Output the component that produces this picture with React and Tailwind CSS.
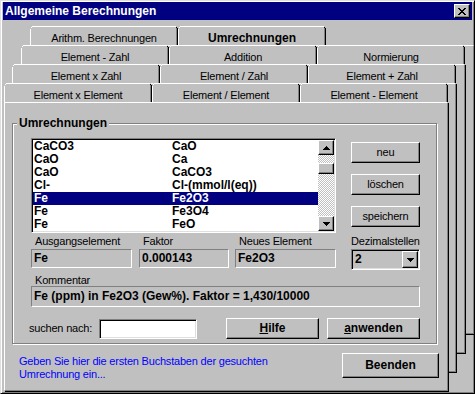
import React from "react";

const BTN =
  "bg-[#c0c0c0] border border-t-white border-l-white border-r-black border-b-black shadow-[inset_-1px_-1px_0_#808080]";
const SUNKEN =
  "border border-t-[#808080] border-l-[#808080] border-r-white border-b-white shadow-[inset_1px_1px_0_#000,inset_-1px_-1px_0_#dfdfdf]";
const STATIC = "border border-t-[#808080] border-l-[#808080] border-r-white border-b-white";

function Tab({ label, bold }) {
  return (
    <div className="relative w-[148px] h-[19px] shrink-0">
      <div className="h-full bg-[#c0c0c0] [clip-path:polygon(2px_0,146px_0,148px_2px,148px_19px,0_19px,0_2px)] flex justify-center pt-[6px]">
        <span className={bold ? "font-bold text-[12px] leading-[13px] tracking-normal" : "leading-[13px]"}>{label}</span>
      </div>
      <svg className="absolute inset-0 pointer-events-none" width="148" height="19" shapeRendering="crispEdges">
        <path d="M0.5 19V2.5M2 0.5H146" stroke="#fff" fill="none" />
        <rect x="1" y="1" width="1" height="1" fill="#fff" />
        <rect x="146" y="1" width="1" height="1" fill="#000" />
        <rect x="147" y="2" width="1" height="17" fill="#000" />
        <rect x="146" y="2" width="1" height="17" fill="#808080" />
      </svg>
    </div>
  );
}

function BackPage({ cls }) {
  return (
    <div
      className={
        "absolute w-[444px] h-[289px] bg-[#c0c0c0] border border-t-white border-l-white border-r-[#808080] border-b-[#808080] shadow-[1px_1px_0_#000] " +
        cls
      }
    />
  );
}

function Btn({ children, cls = "", bold }) {
  return (
    <div className={BTN + " flex items-center justify-center " + (bold ? "font-bold text-[12px] tracking-normal " : "") + cls}>
      {children}
    </div>
  );
}

function Arrow({ up }) {
  return (
    <svg width="7" height="4" shapeRendering="crispEdges">
      {up ? (
        <path d="M3 0h1v1h1v1h1v1h1v1H0V3h1V2h1V1h1z" fill="#000" />
      ) : (
        <path d="M0 0h7v1H6v1H5v1H4v1H3V3H2V2H1V1H0z" fill="#000" />
      )}
    </svg>
  );
}

const ROWS = [
  ["CaCO3", "CaO"],
  ["CaO", "Ca"],
  ["CaO", "CaCO3"],
  ["Cl-", "Cl-(mmol/l(eq))"],
  ["Fe", "Fe2O3", true],
  ["Fe", "Fe3O4"],
  ["Fe", "FeO"],
];

export default function App() {
  return (
    <div className="w-[475px] h-[394px] overflow-hidden bg-[#c0c0c0] font-['Liberation_Sans',Arial,sans-serif] text-[11px] leading-[13px] tracking-[-0.2px] text-black border border-t-[#dfdfdf] border-l-[#dfdfdf] border-r-black border-b-black shadow-[inset_1px_1px_0_#fff,inset_-1px_-1px_0_#808080] pt-[1px] px-[2px] flex flex-col">
      {/* title bar */}
      <div className="h-[18px] shrink-0 bg-[#000080] flex items-center justify-between pl-[2px] pr-[2px]">
        <span className="text-white font-bold text-[12px] leading-[14px] tracking-normal">Allgemeine Berechnungen</span>
        <div className={BTN + " w-[16px] h-[14px] flex items-center justify-center"}>
          <svg width="8" height="7" shapeRendering="crispEdges">
            <path
              d="M0 0h2v1h1v1h2V1h1V0h2v1H7v1H6v1H5v1h1v1h1v1h1v1H6V6H5V5H3v1H2v1H0V6h1V5h1V4h1V3H2V2H1V1H0z"
              fill="#000"
            />
          </svg>
        </div>
      </div>

      {/* tabs + pages */}
      <div className="relative mt-[6px] flex-1">
        <BackPage cls="left-[27px] top-[19px]" />
        <BackPage cls="left-[18px] top-[38px]" />
        <BackPage cls="left-[9px] top-[57px]" />

        <div className="relative flex ml-[27px]">
          <Tab label="Arithm. Berechnungen" />
          <Tab label="Umrechnungen" bold />
        </div>
        <div className="relative flex ml-[18px]">
          <Tab label="Element - Zahl" />
          <Tab label="Addition" />
          <Tab label="Normierung" />
        </div>
        <div className="relative flex ml-[9px]">
          <Tab label="Element x Zahl" />
          <Tab label="Element / Zahl" />
          <Tab label="Element + Zahl" />
        </div>
        <div className="relative flex ml-[1px]">
          <Tab label="Element x Element" />
          <Tab label="Element / Element" />
          <Tab label="Element - Element" />
        </div>

        {/* front page */}
        <div className="relative ml-[1px] w-[444px] h-[289px] bg-[#c0c0c0] border border-t-white border-l-white border-r-[#808080] border-b-[#808080] shadow-[1px_1px_0_#000] pl-[7px] pt-[20px]">
          {/* group box */}
          <div className="relative w-[425px] h-[221px] border border-[#808080] shadow-[inset_1px_1px_0_#fff,1px_1px_0_#fff] pl-[18px] pt-[14px]">
            <div className="absolute left-[4px] top-[-8px] bg-[#c0c0c0] px-[2px] font-bold text-[12px] leading-[14px] tracking-normal">
              Umrechnungen
            </div>

            <div className="flex">
              {/* listbox */}
              <div className={SUNKEN + " w-[305px] h-[95px] bg-white p-[1px] flex"}>
                <div className="flex-1 font-bold text-[12px] tracking-normal">
                  {ROWS.map(([a, b, sel], i) => (
                    <div
                      key={i}
                      className={
                        "h-[13px] leading-[13px] flex " + (sel ? "bg-[#000080] text-white" : "")
                      }
                    >
                      <span className="w-[139px] pl-[1px]">{a}</span>
                      <span>{b}</span>
                    </div>
                  ))}
                </div>
                <div className="w-[16px] flex flex-col bg-[repeating-conic-gradient(#c0c0c0_0_25%,#fff_0_50%)] bg-[length:2px_2px]">
                  <div className={BTN + " h-[15px] flex items-center justify-center"}>
                    <Arrow up />
                  </div>
                  <div className="h-[8px]" />
                  <div className={BTN + " h-[11px]"} />
                  <div className="flex-1" />
                  <div className={BTN + " h-[15px] flex items-center justify-center"}>
                    <Arrow />
                  </div>
                </div>
              </div>
              {/* buttons */}
              <div className="ml-[15px] mt-[4px] flex flex-col gap-[11px]">
                <Btn cls="w-[69px] h-[21px]">neu</Btn>
                <Btn cls="w-[69px] h-[21px]">löschen</Btn>
                <Btn cls="w-[69px] h-[21px]">speichern</Btn>
              </div>
            </div>

            {/* field labels + fields */}
            <div className="flex mt-[2px]">
              <div className="w-[101px]">
                <div className="pl-[4px] h-[14px]">Ausgangselement</div>
                <div className={STATIC + " h-[19px] font-bold text-[12px] tracking-normal pl-[2px] leading-[16px]"}>Fe</div>
              </div>
              <div className="w-[90px] ml-[7px]">
                <div className="pl-[4px] h-[14px]">Faktor</div>
                <div className={STATIC + " h-[19px] font-bold text-[12px] tracking-normal pl-[2px] leading-[16px]"}>0.000143</div>
              </div>
              <div className="w-[101px] ml-[6px]">
                <div className="pl-[4px] h-[14px]">Neues Element</div>
                <div className={STATIC + " h-[19px] font-bold text-[12px] tracking-normal pl-[2px] leading-[16px]"}>Fe2O3</div>
              </div>
              <div className="w-[69px] ml-[15px]">
                <div className="h-[14px]">Dezimalstellen</div>
                <div className={SUNKEN + " h-[21px] flex items-center justify-between pl-[3px] pr-[1px]"}>
                  <span className="font-bold text-[12px] tracking-normal">2</span>
                  <div className={BTN + " w-[16px] h-[17px] flex items-center justify-center"}>
                    <Arrow />
                  </div>
                </div>
              </div>
            </div>

            {/* Kommentar */}
            <div className="pl-[4px] mt-[4px] h-[12px] leading-[12px]">Kommentar</div>
            <div className={STATIC + " w-[389px] h-[21px] font-bold text-[12px] tracking-normal pl-[2px] leading-[18px]"}>
              Fe (ppm) in Fe2O3 (Gew%). Faktor = 1,430/10000
            </div>

            {/* search row */}
            <div className="flex items-center mt-[11px]">
              <span className="ml-[-2px] w-[70px]">suchen nach:</span>
              <div className={SUNKEN + " w-[98px] h-[20px] bg-white"} />
              <Btn cls="w-[93px] h-[21px] ml-[29px]" bold>
                <span>
                  <span className="underline">H</span>ilfe
                </span>
              </Btn>
              <Btn cls="w-[93px] h-[21px] ml-[8px]" bold>
                <span>
                  <span className="underline">a</span>nwenden
                </span>
              </Btn>
            </div>
          </div>

          {/* bottom row */}
          <div className="flex mt-[9px]">
            <div className="ml-[7px] w-[320px] text-[#0000ff] leading-[13px] pt-[2px]">
              Geben Sie hier die ersten Buchstaben der gesuchten
              <br />
              Umrechnung ein...
            </div>
            <Btn cls="w-[97px] h-[25px] ml-[3px]" bold>
              Beenden
            </Btn>
          </div>
        </div>
      </div>
    </div>
  );
}
